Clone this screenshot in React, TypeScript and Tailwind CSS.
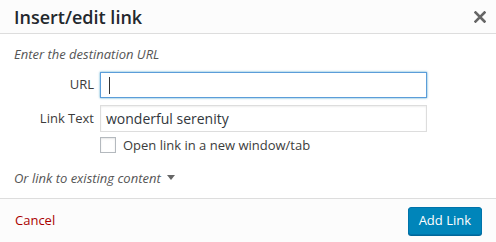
import React from 'react';

export default function App() {
  return (
    <div className="w-[496px] h-[242px] flex flex-col bg-white text-[#444] font-['Open_Sans',sans-serif] overflow-hidden">
      <div className="h-[34px] shrink-0 flex items-center justify-between pl-[14px] pr-[6px] bg-[#fcfcfc] border-b border-[#ddd]">
        <h1 className="text-[18px] font-semibold text-[#23282d] leading-none">Insert/edit link</h1>
        <button className="w-[20px] h-[20px] flex items-center justify-center text-[#666]">
          <svg width="12" height="12" viewBox="0 0 12 12">
            <path d="M1.5 1.5 L10.5 10.5 M10.5 1.5 L1.5 10.5" stroke="currentColor" strokeWidth="2.6" strokeLinecap="square" />
          </svg>
        </button>
      </div>

      <div className="flex-1 flex flex-col px-[14px] pt-[11px]">
        <p className="text-[13px] italic text-[#555] leading-[18px]">Enter the destination URL</p>
        <div className="mt-[9px] flex flex-col gap-[7px]">
          <div className="flex items-center">
            <label className="w-[86px] pr-[6px] text-right text-[13px] text-[#3c3c3c]">URL</label>
            <div className="w-[327px] h-[26px] border border-[#5b9dd9] shadow-[0_0_2px_rgba(30,140,190,0.8)] flex items-center px-[8px]">
              <span className="w-px h-[17px] bg-[#333]" />
            </div>
          </div>
          <div className="flex items-center">
            <label className="w-[86px] pr-[6px] text-right text-[13px] text-[#3c3c3c]">Link Text</label>
            <div className="w-[327px] h-[27px] border border-[#ddd] shadow-[inset_0_1px_2px_rgba(0,0,0,0.07)] flex items-center px-[5px] text-[14px] text-[#32373c]">
              wonderful serenity
            </div>
          </div>
        </div>
        <div className="mt-[4px] ml-[86px] flex items-center gap-[7px] leading-[18px]">
          <span className="w-[16px] h-[16px] border border-[#b4b9be] bg-white shadow-[inset_0_1px_2px_rgba(0,0,0,0.1)]" />
          <span className="text-[13px] text-[#3c3c3c]">Open link in a new window/tab</span>
        </div>
        <div className="mt-[15px] flex items-center gap-[6px] leading-[18px]">
          <span className="text-[13px] italic text-[#555]">Or link to existing content</span>
          <svg width="8" height="6" viewBox="0 0 8 6">
            <path d="M0 0 L8 0 L4 5 Z" fill="#666" />
          </svg>
        </div>
      </div>

      <div className="h-[44px] shrink-0 flex items-center justify-between pl-[15px] pr-[14px] bg-[#fcfcfc] border-t border-[#ddd]">
        <span className="text-[13px] text-[#a00]">Cancel</span>
        <button className="h-[28px] px-[10px] rounded-[3px] bg-[#0085ba] border border-[#0073aa] shadow-[0_1px_0_#006799] text-white text-[13px] font-medium leading-none">
          Add Link
        </button>
      </div>
    </div>
  );
}
